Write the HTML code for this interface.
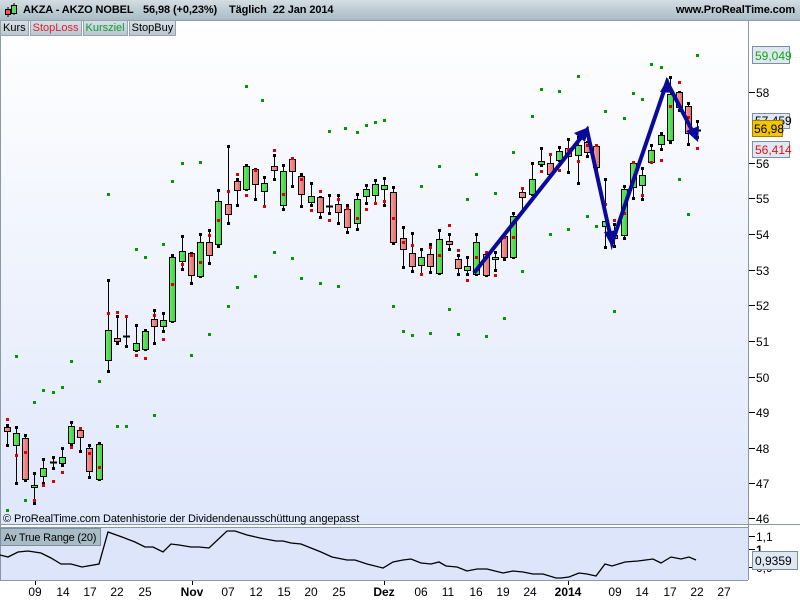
<!DOCTYPE html>
<html><head><meta charset="utf-8"><style>
body{margin:0;width:800px;height:600px;overflow:hidden;font-family:"Liberation Sans",Arial,sans-serif;background:#fff;position:relative}
.hdr{position:absolute;left:0;top:0;width:800px;height:20px;background:linear-gradient(#d3dde3,#a9bcc6);border-bottom:1px solid #8a9ca6;font-weight:bold;font-size:11px;line-height:20px;letter-spacing:-0.1px}
.tabs{position:absolute;top:20px;left:0;height:16px;display:flex;font-size:11px;line-height:15px}
.tabs div{background:linear-gradient(#d8e0e6,#b9c7d0);border:1px solid #95a5ae;padding:0 2px;margin-right:1px}
svg{position:absolute;left:0;top:0}
</style></head><body>
<svg width="800" height="600" font-family="Liberation Sans, Arial, sans-serif">
<defs>
<linearGradient id="bg" x1="0" y1="0" x2="0" y2="1"><stop offset="0" stop-color="#ffffff"/><stop offset="1" stop-color="#dfe7fb"/></linearGradient>
<linearGradient id="rd" x1="0" y1="0" x2="1" y2="0"><stop offset="0" stop-color="#f7a0a0"/><stop offset="1" stop-color="#e26a6a"/></linearGradient>
<linearGradient id="gr" x1="0" y1="0" x2="1" y2="0"><stop offset="0" stop-color="#66ee66"/><stop offset="1" stop-color="#44cc44"/></linearGradient>
</defs>
<rect x="0" y="20" width="748" height="504" fill="url(#bg)"/>
<rect x="0" y="527" width="748" height="53" fill="#dde5fb"/>
<line x1="748.5" y1="20" x2="748.5" y2="580" stroke="#8a9aa4"/>
<line x1="0" y1="524.5" x2="800" y2="524.5" stroke="#8a9aa4"/>
<line x1="0" y1="527.5" x2="748" y2="527.5" stroke="#8a9aa4"/>
<line x1="0" y1="580.5" x2="748" y2="580.5" stroke="#8a9aa4"/>
<line x1="0.5" y1="20" x2="0.5" y2="580" stroke="#8a9aa4"/>
<g id="cand"></g>
<g id="dots"></g>
<g stroke="#0a0a9a" stroke-width="4" fill="none" stroke-linejoin="miter">
<polyline points="474,273 587,130 612,243 667,82 696,138"/>
</g>
<g fill="#0a0a9a">
<polygon points="589,127 574,133 585,142"/>
<polygon points="612,247 604,232 617,230"/>
<polygon points="668,78 660,92 673,93"/>
<polygon points="698,142 686,131 699,126"/>
</g>
<g font-size="12" fill="#000">
<g stroke="#000"><line x1="749" y1="92.5" x2="755" y2="92.5"/><line x1="749" y1="163.5" x2="755" y2="163.5"/><line x1="749" y1="198.5" x2="755" y2="198.5"/><line x1="749" y1="234.5" x2="755" y2="234.5"/><line x1="749" y1="270.5" x2="755" y2="270.5"/><line x1="749" y1="305.5" x2="755" y2="305.5"/><line x1="749" y1="341.5" x2="755" y2="341.5"/><line x1="749" y1="377.5" x2="755" y2="377.5"/><line x1="749" y1="412.5" x2="755" y2="412.5"/><line x1="749" y1="448.5" x2="755" y2="448.5"/><line x1="749" y1="483.5" x2="755" y2="483.5"/><line x1="749" y1="518.5" x2="755" y2="518.5"/><line x1="749" y1="536.5" x2="755" y2="536.5"/><line x1="749" y1="549.5" x2="755" y2="549.5"/><line x1="749" y1="567.5" x2="755" y2="567.5"/></g>
<text x="756" y="97">58</text><text x="756" y="168">56</text><text x="756" y="203">55</text><text x="756" y="239">54</text><text x="756" y="275">53</text><text x="756" y="310">52</text><text x="756" y="346">51</text><text x="756" y="382">50</text><text x="756" y="417">49</text><text x="756" y="453">48</text><text x="756" y="488">47</text><text x="756" y="523">46</text>
<text x="756" y="541">1,1</text><text x="756" y="554" font-weight="bold">1</text><text x="756" y="572">0,9</text>
</g>
<rect x="752.5" y="46.5" width="37" height="17" fill="#dfe7f2" stroke="#7d8f9c"/><text x="755" y="60" font-size="12" fill="#11aa11">59,049</text>
<rect x="752.5" y="113.5" width="37" height="15" fill="#dfe7f2" stroke="#7d8f9c"/><text x="755" y="125" font-size="12" fill="#000">57,459</text>
<rect x="752.5" y="120.5" width="30" height="16" fill="#f5c400" stroke="#a08000"/><text x="754" y="133" font-size="12">56,98</text>
<rect x="752.5" y="141.5" width="37" height="16" fill="#dfe7f2" stroke="#7d8f9c"/><text x="755" y="154" font-size="12" fill="#dd1111">56,414</text>
<rect x="752.5" y="551.5" width="45" height="18" fill="#dfe7f2" stroke="#7d8f9c"/><text x="755" y="565" font-size="12">0,9359</text>
<polyline fill="none" stroke="#000" stroke-width="1.3" points="0,555 8,557 18,552 28,551 41,553 51,558 61,564 71,564 82,567 99,564 108,532 122,537 135,542 145,547 153,547 163,552 171,544 179,545 191,547 199,547 209,548 227,531 235,531 247,535 260,538 276,541 283,541 291,543 301,544 311,548 321,552 332,557 347,560 355,560 367,564 383,568 393,562 403,560 411,559 421,563 431,564 439,562 446,566 457,567 467,571 477,569 487,569 503,573 513,571 523,572 533,574 543,574 556,578 561,578 569,577 579,573 587,574 596,576 605,564 612,566 625,562 638,561 653,559 661,563 671,557 681,559 689,557 696,560"/>
<rect x="0.5" y="528.5" width="100" height="17" fill="#a8bcc6" stroke="#7d8f9c"/><text x="4" y="541" font-size="11" letter-spacing="-0.2">Av True Range (20)</text>
<text x="3" y="522" font-size="11" letter-spacing="-0.1">© ProRealTime.com  Datenhistorie der Dividendenausschüttung angepasst</text>
<g font-size="12" text-anchor="middle">
<text x="35" y="596">09</text><text x="63" y="596">14</text><text x="90" y="596">17</text><text x="117" y="596">22</text><text x="145" y="596">25</text><text x="192" y="596" font-weight="bold">Nov</text><text x="228" y="596">07</text><text x="256" y="596">12</text><text x="284" y="596">15</text><text x="311" y="596">20</text><text x="339" y="596">25</text><text x="384" y="596" font-weight="bold">Dez</text><text x="421" y="596">06</text><text x="448" y="596">11</text><text x="476" y="596">16</text><text x="503" y="596">19</text><text x="530" y="596">24</text><text x="568" y="596" font-weight="bold">2014</text><text x="615" y="596">09</text><text x="642" y="596">14</text><text x="670" y="596">17</text><text x="697" y="596">22</text><text x="724" y="596">27</text>
</g>
<g stroke="#000"><line x1="35.5" y1="581" x2="35.5" y2="585"/><line x1="192.5" y1="581" x2="192.5" y2="585"/><line x1="384.5" y1="581" x2="384.5" y2="585"/><line x1="568.5" y1="581" x2="568.5" y2="585"/></g>
</svg>
<div class="hdr"><span style="position:absolute;left:4px;top:3px;width:14px;height:14px">
<svg width="14" height="14" style="position:static"><line x1="4" y1="4" x2="4" y2="14" stroke="#000"/><rect x="1.5" y="6.5" width="5" height="5" fill="#e55" stroke="#000"/><line x1="10" y1="0" x2="10" y2="12" stroke="#000"/><rect x="7.5" y="2.5" width="5" height="8" fill="#5d5" stroke="#000"/></svg></span>
<span style="position:absolute;left:23px">AKZA - AKZO NOBEL</span><span style="position:absolute;left:143px">56,98 (+0,23%)</span><span style="position:absolute;left:229px">Täglich&nbsp; 22 Jan 2014</span><span style="position:absolute;right:5px">www.ProRealTime.com</span></div>
<div class="tabs"><div>Kurs</div><div style="color:#dd2233">StopLoss</div><div style="color:#119933">Kursziel</div><div>StopBuy</div></div>
<script>
var C=[[7,427,431,425,445,0,419],[16,433,445,427,483,1,455],[25,438,479,435,480,0,452],[34,485,487,473,503,1,500],[43,468,476,459,483,1,485],[53,462,462,457,468,2,481],[62,457,463,448,465,1,472],[71,426,443,422,444,1,447],[80,430,437,429,451,0,428],[89,448,471,445,477,0,453],[99,444,479,443,479,1,467],
[108,330,360,280,371,1,313],[117,338,341,316,343,0,312],[126,336,336,316,346,2,316],[136,343,350,325,350,1,355],[145,331,349,330,349,1,358],[154,319,326,310,343,0,315],[163,320,326,313,331,1,339],[172,257,321,255,321,1,284],[182,251,261,236,269,1,264],[191,253,275,253,283,0,255],[200,242,276,234,276,1,262],[209,242,255,230,263,0,235],[218,201,244,190,246,1,220],[228,204,214,146,223,0,191],[237,181,190,179,205,0,174],
[246,166,189,165,189,1,195],[255,169,184,169,199,0,170],[264,183,191,177,206,1,206],[274,166,170,155,179,0,150],[283,171,205,165,209,1,194],[292,159,171,158,186,0,158],[301,176,194,174,206,0,179],[311,196,202,183,205,1,210],[320,197,212,197,217,0,191],[329,206,206,195,213,2,220],[338,204,212,195,223,0,199],[347,209,227,205,232,0,208],[357,199,223,194,229,1,218],[366,189,196,185,203,1,209],[375,184,195,180,203,1,203],[384,185,189,178,205,1,201],[393,192,242,187,243,0,218],[403,238,249,227,267,0,242],[412,253,266,233,271,0,245],[421,257,265,249,274,1,274],[430,254,266,244,272,0,247],[439,239,273,230,273,1,255],[449,241,244,234,249,0,225],[458,259,268,255,274,0,250],[467,266,270,257,274,1,280],[476,242,274,234,274,1,257],[486,254,275,252,275,0,252],[495,257,259,252,270,1,275],[504,236,257,236,259,0,237],[513,216,257,213,257,1,237],[522,192,197,188,211,0,188],[532,179,194,163,194,1,198],[541,161,164,148,165,1,171],[550,163,174,154,174,0,154],[559,151,160,147,160,1,170],[568,148,156,139,172,0,149],[578,145,155,137,183,1,161],[587,142,152,142,156,0,145],[596,146,167,146,168,0,145],[605,221,226,179,247,1,204],[614,235,238,224,246,0,220],[624,189,235,186,238,1,213],[633,163,187,162,198,1,162],[642,175,185,168,199,1,195],[651,150,162,145,162,1,162],[661,135,144,133,149,1,160],[670,94,140,77,142,1,106],[679,92,107,92,110,0,82],[688,106,133,103,144,0,117],[697,130,130,121,137,2,148]];
var s='';
C.forEach(function(c){var x=c[0];s+='<line x1="'+(x+.5)+'" y1="'+c[3]+'" x2="'+(x+.5)+'" y2="'+c[4]+'" stroke="#000"/>';
s+='<rect x="'+(x-1)+'" y="'+(c[3]-1)+'" width="3" height="3" fill="#000"/><rect x="'+(x-1)+'" y="'+(c[4]-1)+'" width="3" height="3" fill="#000"/>';
if(c[5]==2)s+='<line x1="'+(x-3)+'" y1="'+(c[1]+.5)+'" x2="'+(x+4)+'" y2="'+(c[1]+.5)+'" stroke="#000" stroke-width="2"/>';
else s+='<rect x="'+(x-2.5)+'" y="'+(c[1]+.5)+'" width="6" height="'+Math.max(2,c[2]-c[1])+'" fill="url(#'+(c[5]?'gr':'rd')+')" stroke="#000"/>';
s+='<rect x="'+(x-1)+'" y="'+(c[6]-1)+'" width="3" height="3" fill="#dd0000"/>';});
document.getElementById('cand').innerHTML=s;
var G=[[16,356],[34,402],[43,390],[53,392],[62,387],[71,361],[99,381],[108,194],[117,426],[126,426],[136,249],[145,257],[154,415],[163,244],[172,181],[182,163],[191,355],[200,162],[209,334],[228,306],[237,287],[246,86],[262,100],[274,252],[292,258],[255,276],[301,278],[320,283],[338,286],[329,131],[345,128],[357,132],[366,125],[375,122],[384,120],[421,186],[439,166],[393,306],[403,331],[412,335],[430,333],[449,309],[458,334],[486,336],[504,318],[476,174],[495,193],[467,199],[513,152],[522,271],[532,116],[541,89],[559,91],[578,76],[550,234],[568,229],[587,216],[596,226],[605,111],[614,311],[624,118],[633,93],[642,99],[651,64],[661,67],[679,179],[688,214],[697,55],[7,510],[25,500]];
var t='';G.forEach(function(g){t+='<rect x="'+(g[0]-1)+'" y="'+(g[1]-1)+'" width="3" height="3" fill="#009900"/>';});
document.getElementById('dots').innerHTML=t;
</script>
</body></html>
